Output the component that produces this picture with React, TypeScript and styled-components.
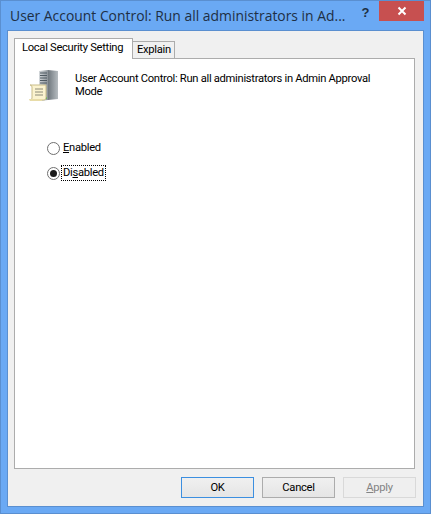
import React from 'react';
import styled, { createGlobalStyle } from 'styled-components';

const GlobalStyle = createGlobalStyle`
  html, body {
    margin: 0;
    padding: 0;
    background: #6aa9f4;
  }
`;

const StyledWindow = styled.div`
  box-sizing: border-box;
  width: 431px;
  height: 514px;
  display: flex;
  flex-direction: column;
  background: #6aa9f4;
  border: 1px solid #5a8fd0;
  padding: 0 6px 6px;
  font-family: Roboto, "Liberation Sans", Arial, sans-serif;
  font-size: 11.2px;
  letter-spacing: -0.3px;
  color: #000;
  overflow: hidden;
`;

const StyledTitleBar = styled.div`
  height: 29px;
  flex: none;
  display: flex;
  align-items: flex-start;
  letter-spacing: normal;
`;

const StyledTitle = styled.div`
  flex: 1;
  margin: 6px 0 0 3px;
  font-family: "Open Sans", sans-serif;
  font-size: 13.9px;
  line-height: 18px;
  color: #1e2f44;
  white-space: nowrap;
`;

const StyledHelp = styled.div`
  width: 15px;
  margin: 4px 6px 0 0;
  font-family: "Liberation Sans", sans-serif;
  font-weight: 700;
  font-size: 13px;
  line-height: 15px;
  text-align: center;
  color: #1e2f44;
`;

const StyledClose = styled.div`
  width: 45px;
  height: 20px;
  background: #c75050;
  display: flex;
  align-items: center;
  justify-content: center;
`;

const StyledClient = styled.div`
  flex: 1;
  display: flex;
  flex-direction: column;
  background: #f0f0f0;
  border: 1px solid #5a8fd0;
  padding: 7px 8px 8px 6px;
  min-height: 0;
`;

const StyledTabs = styled.div`
  display: flex;
  align-items: flex-end;
  height: 20px;
  flex: none;
`;

const StyledTab = styled.div<{ $active?: boolean }>`
  box-sizing: border-box;
  height: ${(p) => (p.$active ? '21px' : '17px')};
  width: ${(p) => (p.$active ? '119px' : '43px')};
  margin-left: ${(p) => (p.$active ? '0' : '-1px')};
  margin-bottom: ${(p) => (p.$active ? '-1px' : '0')};
  border: 1px solid #acacac;
  border-bottom: none;
  background: ${(p) => (p.$active ? '#fff' : '#f0f0f0')};
  position: relative;
  z-index: ${(p) => (p.$active ? 1 : 0)};
  padding: ${(p) => (p.$active ? '2px 0 0 7px' : '1px 0 0 4px')};
  line-height: 14px;
  white-space: nowrap;
`;

const StyledPanel = styled.div`
  flex: 1;
  background: #fff;
  border: 1px solid #acacac;
  padding: 11px 14px;
  min-height: 0;
`;

const StyledHeader = styled.div`
  display: flex;
  align-items: flex-start;
  gap: 17px;
`;

const StyledHeaderIcon = styled.svg`
  flex: none;
  width: 29px;
  height: 32px;
`;

const StyledHeaderText = styled.p`
  margin: 2px 0 0;
  width: 315px;
  line-height: 13px;
`;

const StyledOptions = styled.div`
  display: flex;
  flex-direction: column;
  gap: 9px;
  margin: 38px 0 0 18px;
`;

const StyledOption = styled.div`
  display: flex;
  align-items: center;
  gap: 2px;
  height: 16px;
`;

const StyledRadio = styled.span<{ $checked?: boolean }>`
  box-sizing: border-box;
  width: 13px;
  height: 13px;
  border-radius: 50%;
  border: 1px solid #707070;
  background: #fff;
  display: flex;
  align-items: center;
  justify-content: center;
  &::after {
    content: '';
    display: ${(p) => (p.$checked ? 'block' : 'none')};
    width: 7px;
    height: 7px;
    border-radius: 50%;
    background: #1a1a1a;
  }
`;

const StyledLabel = styled.span<{ $focused?: boolean }>`
  padding: 0 1px;
  line-height: 14px;
  outline: ${(p) => (p.$focused ? '1px dotted #000' : 'none')};
`;

const StyledKey = styled.span`
  text-decoration: underline;
`;

const StyledFooter = styled.div`
  flex: none;
  display: flex;
  justify-content: flex-end;
  gap: 8px;
  margin: 8px -1px 0 0;
`;

const StyledButton = styled.button<{ $primary?: boolean }>`
  box-sizing: border-box;
  width: 73px;
  height: 21px;
  padding: 0;
  font: inherit;
  letter-spacing: inherit;
  color: ${(p) => (p.disabled ? '#838383' : '#000')};
  background: ${(p) => (p.disabled ? '#efefef' : 'linear-gradient(#f0f0f0, #e5e5e5)')};
  border: 1px solid ${(p) => (p.disabled ? '#d9d9d9' : p.$primary ? '#3c8fe0' : '#acacac')};
`;

const ServerIcon = () => (
  <StyledHeaderIcon viewBox="0 0 29 32">
    <defs>
      <linearGradient id="side" x1="0" x2="1" y1="0" y2="0">
        <stop offset="0" stopColor="#6f777d" />
        <stop offset="1" stopColor="#b6bcc0" />
      </linearGradient>
      <linearGradient id="front" x1="0" x2="1" y1="0" y2="0">
        <stop offset="0" stopColor="#d4d8db" />
        <stop offset="1" stopColor="#8b9298" />
      </linearGradient>
    </defs>
    <path d="M10 1 L19 0 L19 30 L10 31 Z" fill="url(#front)" />
    <path d="M19 0 L29 1 L29 29 L19 30 Z" fill="url(#side)" />
    <path d="M11 3h7M11 5.5h7M11 8h7M11 10.5h7M11 13h7" stroke="#4f5a62" strokeWidth="1" />
    <rect x="16" y="27" width="2" height="2" fill="#49b04c" />
    <path d="M1 15 H17 V28 Q17 30 15 30 H1 Q3 30 3 28 V17 Q3 15 1 15 Z" fill="#fbf3cf" stroke="#c9bd8a" />
    <path d="M0 29 H13 V31 H2 Q0 31 0 29 Z" fill="#e8dca8" />
    <path d="M6 19h8M6 22h8M6 25h8" stroke="#8b8a78" strokeWidth="1" />
  </StyledHeaderIcon>
);

const App = () => {
  return (
    <StyledWindow>
      <GlobalStyle />
      <StyledTitleBar>
        <StyledTitle>User Account Control: Run all administrators in Ad...</StyledTitle>
        <StyledHelp>?</StyledHelp>
        <StyledClose>
          <svg width="10" height="10" viewBox="0 0 10 10">
            <path d="M1.5 1.5 L8.5 8.5 M8.5 1.5 L1.5 8.5" stroke="#fff" strokeWidth="2" />
          </svg>
        </StyledClose>
      </StyledTitleBar>
      <StyledClient>
        <StyledTabs>
          <StyledTab $active>Local Security Setting</StyledTab>
          <StyledTab>Explain</StyledTab>
        </StyledTabs>
        <StyledPanel>
          <StyledHeader>
            <ServerIcon />
            <StyledHeaderText>
              User Account Control: Run all administrators in Admin Approval Mode
            </StyledHeaderText>
          </StyledHeader>
          <StyledOptions>
            <StyledOption>
              <StyledRadio />
              <StyledLabel>
                <StyledKey>E</StyledKey>nabled
              </StyledLabel>
            </StyledOption>
            <StyledOption>
              <StyledRadio $checked />
              <StyledLabel $focused>
                Di<StyledKey>s</StyledKey>abled
              </StyledLabel>
            </StyledOption>
          </StyledOptions>
        </StyledPanel>
        <StyledFooter>
          <StyledButton $primary>OK</StyledButton>
          <StyledButton>Cancel</StyledButton>
          <StyledButton disabled>
            <StyledKey>A</StyledKey>pply
          </StyledButton>
        </StyledFooter>
      </StyledClient>
    </StyledWindow>
  );
};

export default App;
